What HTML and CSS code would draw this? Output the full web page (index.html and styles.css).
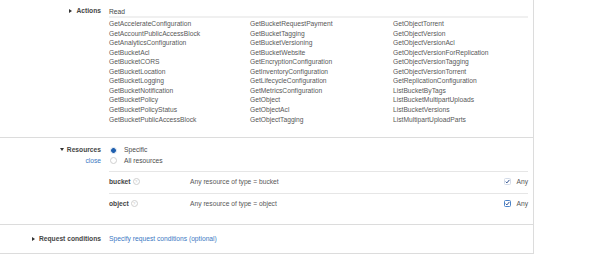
FILE: index.html
```html
<!DOCTYPE html>
<html>
<head>
<meta charset="utf-8">
<link rel="stylesheet" href="styles.css">
</head>
<body>
<div class="panel">
  <section class="sec sec-actions">
    <div class="label label-actions"><span class="tri-right"></span>Actions</div>
    <div class="content">
      <div class="group-head">Read</div>
      <div class="cols">
        <ul class="col">
          <li>GetAccelerateConfiguration</li>
          <li>GetAccountPublicAccessBlock</li>
          <li>GetAnalyticsConfiguration</li>
          <li>GetBucketAcl</li>
          <li>GetBucketCORS</li>
          <li>GetBucketLocation</li>
          <li>GetBucketLogging</li>
          <li>GetBucketNotification</li>
          <li>GetBucketPolicy</li>
          <li>GetBucketPolicyStatus</li>
          <li>GetBucketPublicAccessBlock</li>
        </ul>
        <ul class="col">
          <li>GetBucketRequestPayment</li>
          <li>GetBucketTagging</li>
          <li>GetBucketVersioning</li>
          <li>GetBucketWebsite</li>
          <li>GetEncryptionConfiguration</li>
          <li>GetInventoryConfiguration</li>
          <li>GetLifecycleConfiguration</li>
          <li>GetMetricsConfiguration</li>
          <li>GetObject</li>
          <li>GetObjectAcl</li>
          <li>GetObjectTagging</li>
        </ul>
        <ul class="col">
          <li>GetObjectTorrent</li>
          <li>GetObjectVersion</li>
          <li>GetObjectVersionAcl</li>
          <li>GetObjectVersionForReplication</li>
          <li>GetObjectVersionTagging</li>
          <li>GetObjectVersionTorrent</li>
          <li>GetReplicationConfiguration</li>
          <li>ListBucketByTags</li>
          <li>ListBucketMultipartUploads</li>
          <li>ListBucketVersions</li>
          <li>ListMultipartUploadParts</li>
        </ul>
      </div>
    </div>
  </section>

  <section class="sec sec-res">
    <div class="label label-res">
      <div><span class="tri-down"></span>Resources</div>
      <a class="link link-close">close</a>
    </div>
    <div class="content">
      <div class="radios">
        <div class="radio-row"><span class="radio on"></span>Specific</div>
        <div class="radio-row"><span class="radio"></span>All resources</div>
      </div>
      <div class="res-table">
        <div class="res-row">
          <div class="res-name">bucket<span class="help">?</span></div>
          <div class="res-desc">Any resource of type = bucket</div>
          <div class="res-any">
            <svg class="cb" width="7" height="7" viewBox="0 0 7 7"><rect x="0.5" y="0.5" width="6" height="6" rx="1" fill="#fff" stroke="#d3dbe8"/><path d="M1.7 3.7 L2.9 4.9 L5.4 1.9" fill="none" stroke="#2c4f8f" stroke-width="1"/></svg>
            <span>Any</span>
          </div>
        </div>
        <div class="res-row">
          <div class="res-name">object<span class="help">?</span></div>
          <div class="res-desc">Any resource of type = object</div>
          <div class="res-any">
            <svg class="cb" width="7" height="7" viewBox="0 0 7 7"><rect x="0.5" y="0.5" width="6" height="6" rx="1" fill="#fff" stroke="#4a83c9"/><path d="M1.7 3.7 L2.9 4.9 L5.4 1.9" fill="none" stroke="#2c4f8f" stroke-width="1"/></svg>
            <span>Any</span>
          </div>
        </div>
      </div>
    </div>
  </section>

  <section class="sec sec-cond">
    <div class="label label-cond"><span class="tri-right"></span>Request conditions</div>
    <div class="content"><a class="link">Specify request conditions (optional)</a></div>
  </section>
</div>
</body>
</html>
```

FILE: styles.css
```css
html, body {
  margin: 0;
  padding: 0;
  background: #fff;
}
body {
  font-family: "Liberation Sans", Arial, sans-serif;
  font-size: 6.7px;
  color: #585858;
}
.panel {
  width: 533px;
  border-right: 1px solid #dcdcdc;
}
.sec {
  display: grid;
  grid-template-columns: 101px 1fr;
  column-gap: 8px;
  border-bottom: 1px solid #dcdcdc;
  padding-right: 5px;
}
.label {
  text-align: right;
  font-weight: bold;
  color: #454545;
}
.tri-right {
  display: inline-block;
  width: 0;
  height: 0;
  border-left: 3px solid #333;
  border-top: 2.5px solid transparent;
  border-bottom: 2.5px solid transparent;
  margin-right: 4px;
  vertical-align: 0;
}
.tri-down {
  display: inline-block;
  width: 0;
  height: 0;
  border-top: 3px solid #333;
  border-left: 2.5px solid transparent;
  border-right: 2.5px solid transparent;
  margin-right: 3px;
  vertical-align: 1px;
}
.link {
  color: #3a78c3;
  font-weight: normal;
  text-decoration: none;
}

/* Actions */
.sec-actions {
  padding-top: 7px;
  padding-bottom: 13px;
}
.label-actions {
  line-height: 7px;
}
.group-head {
  line-height: 9px;
  color: #474747;
  border-bottom: 2px solid #f0f0f0;
}
.cols {
  display: grid;
  grid-template-columns: 141px 143px 1fr;
  margin-top: 1.2px;
}
.col {
  list-style: none;
  margin: 0;
  padding: 0;
  line-height: 9.53px;
  white-space: nowrap;
}

/* Resources */
.sec-res {
  padding-top: 7px;
  padding-bottom: 9px;
}
.label-res {
  line-height: 10.5px;
}
.link-close {
  display: block;
}
.radio-row {
  display: flex;
  align-items: center;
  line-height: 10.5px;
  color: #4d4d4d;
}
.radio {
  width: 7px;
  height: 7px;
  box-sizing: border-box;
  border-radius: 50%;
  border: 1px solid #cfcfcf;
  background: #fff;
  margin-left: 1px;
  margin-right: 7px;
}
.radio.on {
  border-color: #d5e0ee;
  background: radial-gradient(circle, #1f5fae 0 2.3px, #fff 2.6px);
}
.res-table {
  margin-top: 5px;
}
.res-row {
  display: flex;
  align-items: center;
  border-top: 1px solid #e6e6e6;
  padding: 5px 0 7px;
  line-height: 9px;
}
.res-name {
  width: 81px;
  display: flex;
  align-items: center;
  font-weight: bold;
  color: #454545;
}
.help {
  width: 5px;
  height: 5px;
  margin-left: 2px;
  border: 0.5px solid #cfcfcf;
  border-radius: 50%;
  font-size: 4px;
  line-height: 5px;
  text-align: center;
  color: #bdbdbd;
  font-weight: normal;
}
.res-desc {
  flex: 1;
}
.res-any {
  display: flex;
  align-items: center;
  gap: 5px;
  color: #555;
}
.cb {
  display: block;
}

/* Request conditions */
.sec-cond {
  padding-top: 9px;
  padding-bottom: 10px;
  line-height: 9px;
}
```
